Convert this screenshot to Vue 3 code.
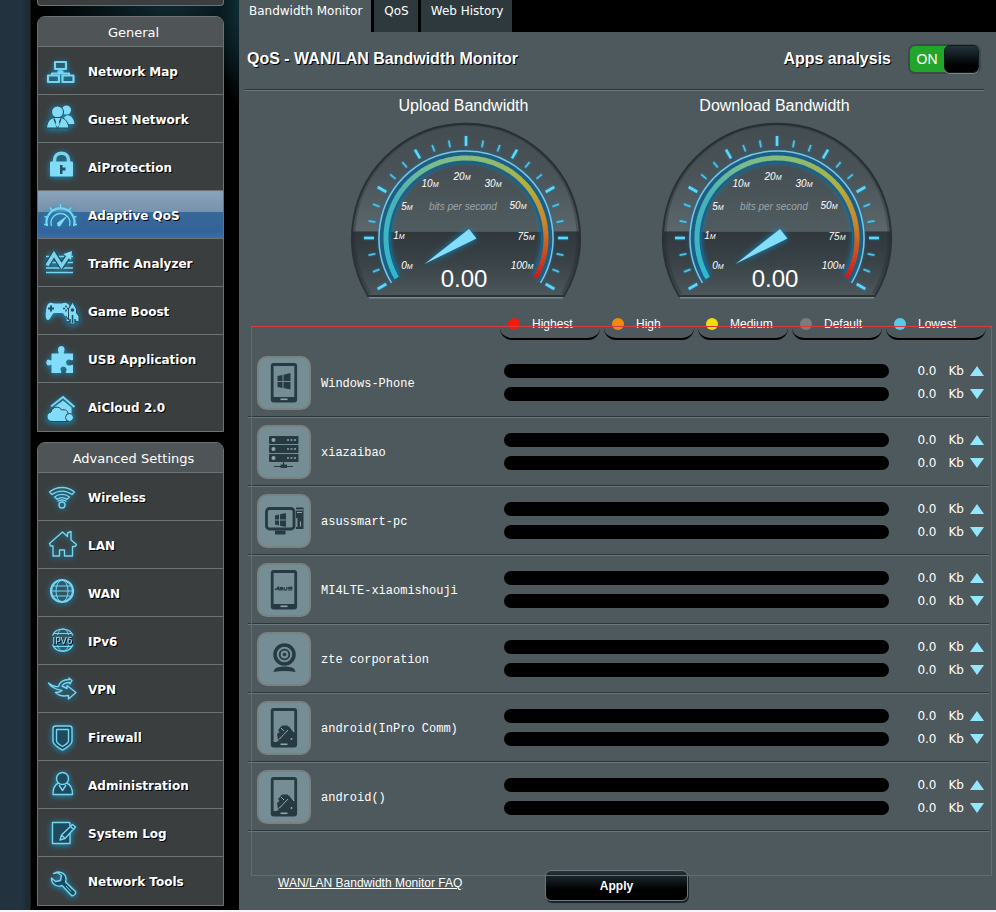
<script setup>
import { ref } from 'vue'

const generalItems = [
  { id: 'map', label: 'Network Map' },
  { id: 'guest', label: 'Guest Network' },
  { id: 'lock', label: 'AiProtection' },
  { id: 'qos', label: 'Adaptive QoS', active: true },
  { id: 'traffic', label: 'Traffic Analyzer' },
  { id: 'game', label: 'Game Boost' },
  { id: 'usb', label: 'USB Application' },
  { id: 'cloud', label: 'AiCloud 2.0' },
]

const advancedItems = [
  { id: 'wifi', label: 'Wireless' },
  { id: 'lan', label: 'LAN' },
  { id: 'wan', label: 'WAN' },
  { id: 'ipv6', label: 'IPv6' },
  { id: 'vpn', label: 'VPN' },
  { id: 'firewall', label: 'Firewall' },
  { id: 'admin', label: 'Administration' },
  { id: 'log', label: 'System Log' },
  { id: 'tools', label: 'Network Tools' },
]

const panels = [
  { title: 'General', items: generalItems },
  { title: 'Advanced Settings', items: advancedItems },
]

const tabs = [
  { label: 'Bandwidth Monitor', active: true },
  { label: 'QoS' },
  { label: 'Web History' },
]

const gauges = [
  { title: 'Upload Bandwidth', value: '0.00' },
  { title: 'Download Bandwidth', value: '0.00' },
]

const priorities = [
  { label: 'Highest', kind: 'highest' },
  { label: 'High', kind: 'high' },
  { label: 'Medium', kind: 'medium' },
  { label: 'Default', kind: 'default' },
  { label: 'Lowest', kind: 'lowest' },
]

const devices = [
  { name: 'Windows-Phone', icon: 'winphone', up: 0, down: 0 },
  { name: 'xiazaibao', icon: 'server', up: 0, down: 0 },
  { name: 'asussmart-pc', icon: 'pc', up: 0, down: 0 },
  { name: 'MI4LTE-xiaomishouji', icon: 'asusphone', up: 0, down: 0 },
  { name: 'zte corporation', icon: 'webcam', up: 0, down: 0 },
  { name: 'android(InPro Comm)', icon: 'android', up: 0, down: 0 },
  { name: 'android()', icon: 'android', up: 0, down: 0 },
]

const analysisOn = ref(true)

// Dial geometry: centre of the face and helpers for polar placement (0deg = up).
const cx = 127
const cy = 123
const point = (deg, r) => {
  const a = (deg * Math.PI) / 180
  return [cx + r * Math.sin(a), cy - r * Math.cos(a)]
}
const arc = (from, to, r) => {
  const [x1, y1] = point(from, r)
  const [x2, y2] = point(to, r)
  return `M${x1.toFixed(2)} ${y1.toFixed(2)}A${r} ${r} 0 ${to - from > 180 ? 1 : 0} 1 ${x2.toFixed(2)} ${y2.toFixed(2)}`
}

const ticks = Array.from({ length: 25 }, (_, i) => {
  const deg = -120 + i * 10
  const long = i % 3 === 0
  const [x1, y1] = point(deg, 92)
  const [x2, y2] = point(deg, long ? 102 : 99)
  return { x1, y1, x2, y2, long }
})

const stops = [
  [-120, [48, 184, 206]],
  [-60, [74, 178, 184]],
  [-25, [122, 188, 142]],
  [15, [138, 188, 116]],
  [50, [178, 176, 62]],
  [80, [206, 132, 40]],
  [105, [200, 66, 32]],
  [120, [206, 24, 28]],
]
const colorAt = (deg) => {
  const i = Math.max(0, stops.findIndex((s) => s[0] >= deg) - 1)
  const [a, ca] = stops[i]
  const [b, cb] = stops[i + 1]
  const t = (deg - a) / (b - a)
  return `rgb(${ca.map((c, k) => Math.round(c + (cb[k] - c) * t)).join(',')})`
}
const segments = Array.from({ length: 80 }, (_, i) => {
  const from = -120 + i * 3
  return { d: arc(from, Math.min(120, from + 3.4), 80), color: colorAt(from + 1.5) }
})

const scale = [
  { n: '0', x: 68, y: 154 },
  { n: '1', x: 60, y: 124 },
  { n: '5', x: 68, y: 95 },
  { n: '10', x: 91, y: 72 },
  { n: '20', x: 123, y: 65 },
  { n: '30', x: 154, y: 72 },
  { n: '50', x: 179, y: 94 },
  { n: '75', x: 187, y: 125 },
  { n: '100', x: 183, y: 154 },
]
</script>

<template>
  <div class="page">
    <aside class="sidebar">
      <div class="panel-tail"></div>
      <nav v-for="panel in panels" :key="panel.title" class="panel" :aria-label="panel.title">
        <h2 class="panel-title">{{ panel.title }}</h2>
        <a
          v-for="item in panel.items"
          :key="item.id"
          href="#"
          class="menu-item"
          :class="{ active: item.active }"
        >
          <svg class="menu-icon" viewBox="0 0 32 32" aria-hidden="true">
            <g v-if="item.id === 'map'" class="line bold">
              <rect x="10" y="6" width="11" height="7" />
              <path d="M12.500 15.500h6M15.500 13v3M7 19v-1.500h17V19" />
              <rect x="3" y="19.500" width="11" height="6.500" />
              <rect x="17.500" y="19.500" width="11" height="6.500" />
            </g>
            <g v-else-if="item.id === 'guest'">
              <circle cx="21.500" cy="6" r="4.500" class="fill" />
              <path class="fill" d="M18.500 14l3-2.500h2.500c3 1 5 4 5.500 8.500h-8z" />
              <circle cx="12.500" cy="8" r="6" class="fill cut" />
              <path class="fill cut" d="M1.500 24c.5-6 3-9.500 7.500-10.500h7c4.500 1 7 4.500 8 10.500z" />
              <path class="dark" d="M9 14.500l3.500 9.500 3.500-9.500" />
              <path class="fill" d="M11.500 14.500h2l1 6-2 3-2-3z" />
            </g>
            <g v-else-if="item.id === 'lock'">
              <path d="M9.500 11V8c0-9 14-9 14 0v3" class="line heavy" />
              <rect x="5" y="9.500" width="23" height="15" rx="1" class="fill" />
              <path class="hole" d="M15 13h2.500v2.500h3v3h-3V22H15z" />
            </g>
            <g v-else-if="item.id === 'qos'">
              <path class="line bold" d="M2 26a14 14 0 1 1 27 0" />
              <path class="line" d="M6.500 26a9.500 9.500 0 1 1 18 0" />
              <path class="line" d="M15.500 9V4M7.500 11L5 7.500M23.500 11L26 7.500M2.500 17.500l-3-1M28.500 17.500l3-1M-1 24.500h4M28 24.500h4" />
              <path class="fill" d="M12.500 26l2.500.5 1.500-2.500 6-8.500-8.500 6-2 1.500z" />
            </g>
            <g v-else-if="item.id === 'traffic'">
              <path class="line" d="M1 8.500h27M1 14.500h27M1 20h27M1 24.500h27" />
              <path class="line cut-wide" d="M2 17.500L9 6l7.500 12L24 7" />
              <path class="line heavy" d="M2 17.500L9 6l7.500 12L24 7" />
              <path class="fill" d="M18.500 6L27 3l-1 9z" />
            </g>
            <g v-else-if="item.id === 'game'">
              <path class="fill" d="M1.500 12C2.500 6 6 6 9 7.500h8c4-2 7.500 0 8 5 .8 5 .5 11-2 11-3 0-3-6.500-6-6.500H9.500C7 17 5.500 24 3 24c-3 0-2.500-7-1.500-12z" />
              <path class="hole" d="M5 9.500h2v2h2v2H7v2H5v-2H3v-2h2z" />
              <path class="dark" d="M18 12.500h6M21 9.500v6" stroke-dasharray="2 2" />
              <path class="fill cut" d="M23.500 24V13l4-7 4 7v4l2.500 3v6l-4-1v3h-5v-3l-4 1v-6z" />
              <circle cx="27.500" cy="14" r="1.800" class="hole" />
              <path class="dark" d="M27.500 19v8M25 23v3M30 23v3" />
            </g>
            <g v-else-if="item.id === 'usb'">
              <path
                class="fill"
                d="M6.500 9.500h7c1-1-1-2-.5-4.500.5-4 6.500-4 6.500 0 .5 2.500-1.500 3.500-.5 4.500h9v6.500c-1 1-2-.5-4-.5-4 0-4 6 0 6 2 0 3-1.500 4-.5V29H21c-1-1 1-2 .5-4-.5-3.500-6-3.500-6 0 0 2 1.500 3 .5 4H6.500v-8c-1-1-2 .5-3 .5-3 0-3-6 0-6 1 0 2 1.500 3 .5z"
              />
            </g>
            <g v-else-if="item.id === 'cloud'">
              <path class="line bold" d="M6 14.500L18 5l11.500 10" />
              <path class="fill" d="M9.500 15L18 8.500l8.500 7V25H10z" />
              <path class="fill cut" d="M7 29.500c-6 0-7-8-1-9.500 1-6 9-6 10.500-2 4-1 7 1 6.500 4 5-.5 7.500 7.500 1 7.500z" />
              <circle cx="24.500" cy="25.500" r="4" class="fill cut" />
            </g>
            <g v-else-if="item.id === 'wifi'" class="line">
              <path d="M4.500 10c7-6 18-6 25 0l-2.500 2.500c-6-4.500-14-4.500-20 0z" />
              <path d="M9.500 15c4.500-3.500 10.500-3.500 15 0l-2.500 2.300c-3-2-7-2-10 0z" />
              <path d="M12.500 19.500c2.500-2 6.500-2 9 0" />
              <circle cx="17" cy="23" r="3" />
            </g>
            <g v-else-if="item.id === 'lan'" class="line">
              <path d="M4.500 13.500L17.500 2l5 4.500V3L26 1.500v8.500l5.500 4.500-1.500 2h-2.500V26h-8v-6h-5v6H8V16H5.500z" />
            </g>
            <g v-else-if="item.id === 'wan'" class="line bold">
              <circle cx="17" cy="13" r="11" />
              <ellipse cx="17" cy="13" rx="6" ry="11" class="thin" />
              <path class="thin" d="M7.500 8h19M7.500 18h19M6 13h22" />
            </g>
            <g v-else-if="item.id === 'ipv6'" class="line">
              <path d="M7.500 9.500C11 1 24.500 1 28 9.500M7.500 18.500C11 27.500 24.500 27.500 28 18.500" />
              <path d="M12.500 9c1-4 3-6 5.500-6s4.500 2 5.500 6M12.500 19c1 4 3 6 5.500 6s4.500-2 5.500-6M9 7.500h18M9 20.500h18" class="thin" />
              <text x="17.500" y="17.500" class="ip-text">IPV6</text>
            </g>
            <g v-else-if="item.id === 'vpn'" class="line">
              <path d="M3.500 9c3.500 3 7 4 10 3.500 1-4.500 5-7 11-7l-.5-1.500 3 2.500-2 3.500-.5-1.500c-4 0-6 1-7.500 3.500l5 2.500v-3l9 7-7.500 6.500v-3.500c-5 1-10 0-13-3 3 0 5-.5 6.500-2C12 15.500 6 14 3.500 9z" />
            </g>
            <g v-else-if="item.id === 'firewall'" class="line">
              <path class="glass" d="M8 6.500c0-2 1-2.500 2.500-2.500h14C26 4 27 5 27 6.500V19c0 4-5 6.500-9.500 9C13 25.500 8 23 8 19z" />
              <path d="M11.500 7.500h12V19c0 2-3 3.500-6 5.500-3-2-6-3.500-6-5.500z" />
            </g>
            <g v-else-if="item.id === 'admin'" class="line">
              <path class="glass" d="M8 24.500c0-6 2-10 5.500-11.500h8c4 1.500 6 5.500 6 11.500z" />
              <circle cx="17.500" cy="8.500" r="6" class="glass" />
              <path d="M14 15l3.500 5.500L21 15" />
            </g>
            <g v-else-if="item.id === 'log'" class="line">
              <path class="glass" d="M25 4.500H7.500v21H25V15M25 8V4.500" />
              <path class="glass" d="M15 22l1.500-5L27.500 6.500l3 2.500L20 20.500zM16.500 17l3.500 3.500M25.500 8.500l3 3" />
            </g>
            <g v-else-if="item.id === 'tools'" class="line">
              <path class="glass" d="M8.500 7.500c5-3.500 12-.5 12.500 5 0 1.500 0 2.500-.5 3.500l10 9.500c1 2-2 5-4 4l-9.500-10c-5 2-11-1.500-10.500-7.500l4 3.500 5-1 1-5-3.500-2.500c-1-.5-3 .5-4.500.5z" />
              <path d="M21 20l5 5.500M24 19.500l3 3.500" class="thin" />
            </g>
          </svg>
          <span>{{ item.label }}</span>
        </a>
      </nav>
    </aside>

    <main class="main">
      <nav class="tabs" aria-label="Sections">
        <a v-for="tab in tabs" :key="tab.label" href="#" class="tab" :class="{ active: tab.active }">{{ tab.label }}</a>
      </nav>

      <section class="content">
        <header class="head">
          <h1 class="title">QoS - WAN/LAN Bandwidth Monitor</h1>
          <span id="analysis-label" class="title">Apps analysis</span>
          <button
            type="button"
            class="switch"
            role="switch"
            aria-labelledby="analysis-label"
            :aria-checked="analysisOn"
            @click="analysisOn = !analysisOn"
          >
            <span class="switch-text">{{ analysisOn ? 'ON' : 'OFF' }}</span>
            <span class="knob"></span>
          </button>
        </header>

        <div class="gauges">
          <figure v-for="(gauge, gi) in gauges" :key="gauge.title" class="gauge">
            <figcaption>{{ gauge.title }}</figcaption>
            <svg class="dial" viewBox="11 7 233 177">
              <defs>
                <linearGradient :id="'face' + gi" x1="0" y1="0" x2="0" y2="1">
                  <stop offset="0" stop-color="#434c50" />
                  <stop offset="0.3" stop-color="#4a5458" />
                  <stop offset="0.62" stop-color="#5b676c" />
                  <stop offset="0.63" stop-color="#30383c" />
                  <stop offset="0.8" stop-color="#394246" />
                  <stop offset="1" stop-color="#4d585c" />
                </linearGradient>
                <linearGradient :id="'core' + gi" x1="0" y1="0" x2="0" y2="1">
                  <stop offset="0" stop-color="#434d51" />
                  <stop offset="1" stop-color="#4e595d" />
                </linearGradient>
              </defs>
              <path d="M30 182.500h194" stroke="#7b878c" stroke-width="2" />
              <path :fill="`url(#face${gi})`" stroke="#2b3337" stroke-width="2" d="M29 181A114 114 0 1 1 225 181z" />
              <path fill="none" stroke="#20282b" stroke-opacity="0.3" stroke-width="3" d="M31 179A112 112 0 1 1 223 179" />
              <path :fill="`url(#core${gi})`" d="M50 117A77 77 0 0 1 204 117z" opacity="0.8" />
              <path class="ring-glow" :d="arc(-120, 120, 83)" />
              <path class="ring-inner" :d="arc(-118, 118, 76)" />
              <path v-for="(s, i) in segments" :key="i" :d="s.d" :stroke="s.color" fill="none" stroke-width="5" />
              <path class="ring-line" :d="arc(-121, 121, 87)" />
              <g class="ticks">
                <line
                  v-for="(t, i) in ticks"
                  :key="i"
                  :x1="t.x1"
                  :y1="t.y1"
                  :x2="t.x2"
                  :y2="t.y2"
                  :class="{ long: t.long }"
                />
              </g>
              <g class="scale">
                <text v-for="s in scale" :key="s.n" :x="s.x" :y="s.y">{{ s.n }}<tspan class="unit">M</tspan></text>
                <text x="124" y="95" class="caption">bits per second</text>
              </g>
              <path class="needle" d="M85.500 149L130 114l7.500 9.500z" />
              <text x="125" y="172" class="reading">{{ gauge.value }}</text>
            </svg>
          </figure>
        </div>

        <div class="monitor">
          <ul class="legend">
            <li v-for="p in priorities" :key="p.kind" :class="p.kind"><i class="dot"></i>{{ p.label }}</li>
          </ul>

          <table class="devices">
            <colgroup>
              <col class="col-icon" />
              <col class="col-name" />
              <col />
              <col class="col-rate" />
            </colgroup>
            <tbody>
              <tr v-for="device in devices" :key="device.name">
                <td>
                  <div class="device-icon">
                    <svg viewBox="2 2 50 50" aria-hidden="true">
                      <g v-if="device.icon === 'server'">
                        <rect x="12" y="11" width="29.500" height="8" rx="1" />
                        <rect x="12" y="20" width="29.500" height="8" rx="1" />
                        <rect x="12" y="29" width="29.500" height="8" rx="1" />
                        <g class="lit">
                          <circle v-for="y in [15, 24, 33]" :key="y" cx="16.500" :cy="y" r="2" />
                        </g>
                        <path class="lit-line" stroke-dasharray="2 1.500" d="M30 15h9M30 24h9M30 33h9" />
                        <path class="ink-line" d="M26.500 37v4M17 41.500h19" />
                        <rect x="23.500" y="39.500" width="6.500" height="3.500" />
                      </g>
                      <g v-else-if="device.icon === 'pc'">
                        <rect x="9.500" y="14.500" width="27.500" height="20.500" rx="3" class="frame" />
                        <rect x="18" y="36.500" width="10.500" height="4" />
                        <path d="M18 21.500l4-1v5h-4zM23 20.200l6-1.200v6.500h-6zM18 26.500h4v5l-4-1zM23 26.500h6V33l-6-1.300z" />
                        <path d="M39 13.500h7.500V35H39v-2h1.500v-9H39z" />
                        <path class="lit-line thin" d="M39 16h7M40 18.500h5M43.500 27.500v5" />
                      </g>
                      <g v-else-if="device.icon === 'webcam'">
                        <circle cx="27.500" cy="22.500" r="9.500" class="frame ring" />
                        <circle cx="27.500" cy="22.500" r="4.800" class="frame iris" />
                        <circle cx="27.500" cy="22.500" r="1.800" />
                        <path d="M19 36c5-2 12-2 17 0 1.500 1 2 2 2.500 4-7-1.500-15-1.500-22 0 .5-2 1-3 2.500-4z" />
                      </g>
                      <g v-else>
                        <rect x="15.200" y="8.500" width="23.500" height="36.500" rx="1.500" class="frame" />
                        <rect x="15" y="41" width="24" height="5" />
                        <path class="lit-line" d="M23.500 43.300h7" />
                        <path v-if="device.icon === 'winphone'" d="M20.500 20l5-1v6h-5zM26.500 18.800l7-1.800v8h-7zM20.500 26h5v6l-5-1zM26.500 26h7v7.500l-7-1.500z" />
                        <g v-else-if="device.icon === 'asusphone'">
                          <path class="ink-line" d="M18 27l3.500-3v3.200M18.500 26h3M26 24.500h-2.500l-.5 1.200h2.500l-.5 1.300H22M27.500 24l-.5 3h2.500l.7-3M35.500 24.300H32l-.5 1.200h3.300l-.3 1.500H31" />
                        </g>
                        <g v-else>
                          <path d="M21 29l4-4.500h5.500l4 4.500-8 8z" />
                          <path d="M20 33l2.500-2 3 3-4.500 5zM30 27l3-1.500 5 7V41h-9l-7-6z" />
                          <path d="M20 41l9-10 8 8v3H20z" />
                          <path class="lit-line thin" d="M22.500 38l8.500-9M24 27l3 3M33 26l4 5" />
                          <circle class="lit" cx="34.500" cy="38" r="1" />
                        </g>
                      </g>
                    </svg>
                  </div>
                </td>
                <td class="device-name">{{ device.name }}</td>
                <td>
                  <div class="bars">
                    <div class="bar"><div class="bar-fill" :style="{ width: device.up + '%' }"></div></div>
                    <div class="bar"><div class="bar-fill" :style="{ width: device.down + '%' }"></div></div>
                  </div>
                </td>
                <td>
                  <div class="rates">
                    <div class="rate"><span>{{ device.up.toFixed(1) }}</span><span>Kb</span><i class="arrow up"></i></div>
                    <div class="rate"><span>{{ device.down.toFixed(1) }}</span><span>Kb</span><i class="arrow down"></i></div>
                  </div>
                </td>
              </tr>
            </tbody>
          </table>

          <footer class="foot">
            <a href="#" class="faq">WAN/LAN Bandwidth Monitor FAQ</a>
            <button type="button" class="apply">Apply</button>
          </footer>
          <div class="outline"></div>
        </div>
      </section>
    </main>
  </div>
</template>

<style>
body {
  background: #f5f6fb;
}
</style>

<style scoped>
* {
  box-sizing: border-box;
}

.page {
  display: flex;
  background: #000;
  color: #fff;
  font-family: "DejaVu Sans", Verdana, sans-serif;
  font-size: 12px;
}

.sidebar {
  flex: none;
  width: 239px;
  padding: 0 15px 4px 37px;
  background:
    linear-gradient(90deg, #22333f 0, #22333f 22px, #1b292f 29px, #2a3234 30px, transparent 31px),
    radial-gradient(ellipse 130px 95px at 170px 0, #0e2a31, transparent),
    radial-gradient(ellipse 20px 110px at 239px 0, #11313a, transparent),
    #000;
}

.panel-tail {
  height: 6px;
  margin-bottom: 10px;
  background: #3a3e3f;
  border: 1px solid #6b7274;
  border-top: 0;
  border-radius: 0 0 4px 4px;
}

.panel {
  margin-bottom: 10px;
  padding-bottom: 1px;
  background: #3a3e3f;
  border: 1px solid #6b7274;
  border-radius: 8px 8px 0 0;
  overflow: hidden;
}

.panel:last-child {
  margin-bottom: 0;
}

.panel-title {
  margin: 0;
  padding: 2px 0 0 6px;
  background: #4f5557;
  font-size: 13px;
  font-weight: 400;
  line-height: 27px;
  text-align: center;
}

.menu-item {
  display: flex;
  align-items: center;
  gap: 11px;
  height: 48px;
  padding: 2px 0 0 7px;
  background: #3a3e3f;
  border-top: 1px solid #6b7274;
  color: #fff;
  font-weight: 700;
  text-decoration: none;
  text-shadow: 1px 1px 0 #000;
}

.menu-item.active {
  background: linear-gradient(#8aa3bb 0, #7792ac 44%, #386898 45%, #33639a 85%, #3a6fa5 100%);
}

.menu-icon {
  flex: none;
  width: 32px;
  height: 32px;
  overflow: visible;
  filter: drop-shadow(0 1px 3px #1394c4);
}

.fill {
  fill: #83dcf7;
}

.cut {
  stroke: #234a59;
  stroke-width: 1;
}

.hole {
  fill: #215064;
}

.dark {
  fill: none;
  stroke: #215064;
  stroke-width: 1.5;
}

.line {
  fill: none;
  stroke: #78d5f0;
  stroke-width: 1.4;
  stroke-linejoin: round;
}

.line.bold {
  stroke-width: 2.2;
}

.line.heavy {
  stroke-width: 3.5;
  stroke-linejoin: miter;
}

.line.cut-wide {
  stroke: #2b4550;
  stroke-width: 6;
}

.line .thin {
  stroke-width: 1;
}

.glass {
  fill: #1d4a5c;
}

.ip-text {
  fill: #9fe6fa;
  stroke: none;
  font-size: 9px;
  font-weight: 400;
  text-anchor: middle;
}

.main {
  flex: 1;
  display: flex;
  flex-direction: column;
  min-width: 0;
}

.tabs {
  display: flex;
  gap: 3px;
}

.tab {
  padding: 0 9px 10px 10px;
  background: #2e393e;
  color: #fff;
  line-height: 22px;
  text-decoration: none;
}

.tab.active {
  background: #4d595d;
}

.content {
  flex: 1;
  background: #4d595d;
  font-family: "Liberation Sans", Arial, sans-serif;
}

.head {
  display: flex;
  align-items: center;
  gap: 17px;
  height: 58px;
  margin: 0 12px 0 5px;
  padding: 0 3px 4px;
  border-bottom: 1px solid #2b373b;
  box-shadow: 0 1px 0 #6b777b;
}

.title {
  margin: 0;
  font-size: 16px;
  font-weight: 700;
  text-shadow: 1px 1px 0 #000;
}

h1.title {
  flex: 1;
}

.switch {
  display: flex;
  align-items: center;
  width: 73px;
  height: 30px;
  padding: 0;
  background: #21a52b;
  border: 2px solid #3d494d;
  border-radius: 7px;
  color: #fff;
  font: 14px "Liberation Sans", Arial, sans-serif;
}

.switch-text {
  flex: 1;
}

.knob {
  width: 35px;
  height: 28px;
  background: linear-gradient(#22343b, #000 75%);
  border: 1px solid #12191c;
  border-radius: 6px;
  box-shadow: 0 1px 0 #7a868a;
}

.gauges {
  display: flex;
  justify-content: center;
  gap: 78px;
  padding: 7px 0 0 9px;
}

.gauge {
  width: 233px;
  margin: 0;
}

.gauge figcaption {
  margin-bottom: 7px;
  padding-right: 6px;
  font-size: 16px;
  line-height: 18px;
  text-align: center;
}

.dial {
  display: block;
  width: 100%;
}

.ring-glow {
  fill: none;
  stroke: #1b5f85;
  stroke-width: 8;
  filter: drop-shadow(0 0 2px #0a73a8);
}

.ring-inner {
  fill: none;
  stroke: #17638c;
  stroke-width: 2;
  filter: drop-shadow(0 0 2px #0a80bd);
}

.ring-line {
  fill: none;
  stroke: #7cc4e4;
  stroke-width: 1.5;
}

.ticks line {
  stroke: #52c0e2;
  stroke-width: 1.8;
}

.ticks {
  filter: drop-shadow(0 0 1px #0d8fc0);
}

.ticks .long {
  stroke: #5fd6fa;
  stroke-width: 2.6;
}

.scale text {
  fill: #fff;
  font-size: 10px;
  font-style: italic;
  text-anchor: middle;
}

.scale .unit {
  font-size: 7px;
}

.scale .caption {
  fill: #9aa5aa;
}

.needle {
  fill: #83defc;
  filter: drop-shadow(0 0 3px #0d8fc8);
}

.reading {
  fill: #fff;
  font-size: 24px;
  text-anchor: middle;
}

.monitor {
  position: relative;
  padding: 17px 7px 8px 9px;
}

.legend {
  display: flex;
  justify-content: flex-end;
  gap: 4px;
  margin: 0 3px 9px 0;
  padding: 0;
  list-style: none;
}

.legend li {
  display: flex;
  align-items: center;
  gap: 12px;
  width: 90px;
  height: 24px;
  padding: 0 0 6px 8px;
  border-bottom: 2px solid #000;
  border-radius: 0 0 12px 12px;
}

.legend .highest,
.legend .lowest {
  width: 100px;
}

.dot {
  width: 12px;
  height: 12px;
  border-radius: 50%;
}

.highest .dot {
  background: #ee1d0c;
}

.high .dot {
  background: #f08a0c;
}

.medium .dot {
  background: #f2dc06;
}

.default .dot {
  background: #7c7c7a;
}

.lowest .dot {
  background: #57cbee;
}

.devices {
  width: 100%;
  border-collapse: separate;
  border-spacing: 0;
  table-layout: fixed;
}

.col-icon {
  width: 73px;
}

.col-name {
  width: 183px;
}

.col-rate {
  width: 100px;
}

.devices td {
  height: 69px;
  padding: 0;
  border-bottom: 1px solid #6b777b;
  box-shadow: inset 0 -1px 0 #2b373b;
}

.device-icon {
  width: 54px;
  height: 54px;
  margin-left: 9px;
  background: #758e95;
  border: 2px solid #7b8081;
  border-radius: 10px;
}

.device-icon svg {
  display: block;
  width: 50px;
  height: 50px;
  fill: #273a42;
}

.device-icon .frame {
  fill: none;
  stroke: #273a42;
  stroke-width: 2.8;
}

.device-icon .ring {
  stroke-width: 3.5;
}

.device-icon .iris {
  stroke-width: 1.8;
}

.device-icon .lit {
  fill: #8fa5ab;
}

.lit-line {
  fill: none;
  stroke: #8fa5ab;
  stroke-width: 1.6;
}

.lit-line.thin {
  stroke-width: 1;
}

.ink-line {
  fill: none;
  stroke: #273a42;
  stroke-width: 1.2;
}

.devices .device-name {
  padding-top: 2px;
  font-family: "Liberation Mono", "Courier New", monospace;
}

.bars,
.rates {
  display: flex;
  flex-direction: column;
  gap: 9px;
  padding-bottom: 1px;
}

.bar {
  height: 14px;
  background: #000;
  border-radius: 7px;
  overflow: hidden;
}

.bar-fill {
  height: 100%;
  background: #57cbee;
}

.rate {
  display: flex;
  align-items: center;
  justify-content: flex-end;
  height: 14px;
  padding-right: 5px;
  font-family: "DejaVu Sans", Verdana, sans-serif;
}

.rate span:first-child {
  margin-right: 12px;
}

.arrow {
  width: 14px;
  height: 10px;
  margin-left: 6px;
  background: #93e7fd;
}

.arrow.up {
  clip-path: polygon(50% 0, 100% 100%, 0 100%);
}

.arrow.down {
  clip-path: polygon(0 0, 100% 0, 50% 100%);
}

.foot {
  display: grid;
  grid-template-columns: 1fr auto 1fr;
  align-items: start;
  padding: 38px 4px 1px 0;
}

.faq {
  padding-left: 30px;
  color: #fff;
  line-height: 26px;
}

.apply {
  width: 143px;
  height: 31px;
  background: linear-gradient(#22333a, #000 65%);
  border: 1px solid #6b777b;
  border-radius: 6px;
  box-shadow: 1px 2px 0 #1c2427;
  color: #fff;
  font: bold 12px "Liberation Sans", Arial, sans-serif;
}

.outline {
  position: absolute;
  inset: 27px 4px 34px 12px;
  border: 1px solid #d93a40;
  pointer-events: none;
}
</style>
